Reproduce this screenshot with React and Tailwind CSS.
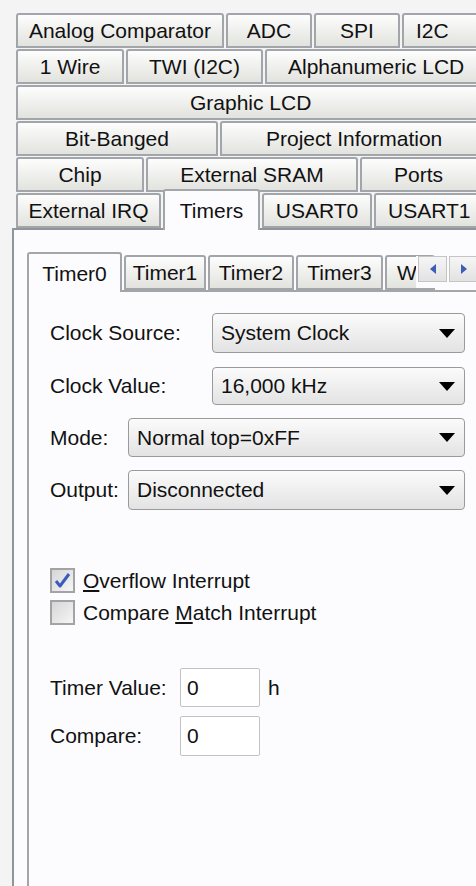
import React from "react";

const tabRows = [
  [
    { label: "Analog Comparator", w: 208 },
    { label: "ADC", w: 86 },
    { label: "SPI", w: 86 },
    { label: "I2C", w: 90, pl: 12 },
  ],
  [
    { label: "1 Wire", w: 108 },
    { label: "TWI (I2C)", w: 137 },
    { label: "Alphanumeric LCD", w: 230, pl: 21 },
  ],
  [{ label: "Graphic LCD", w: 480, pl: 172 }],
  [
    { label: "Bit-Banged", w: 202 },
    { label: "Project Information", w: 270, pl: 44 },
  ],
  [
    { label: "Chip", w: 128 },
    { label: "External SRAM", w: 212 },
    { label: "Ports", w: 130, pl: 32 },
  ],
];

const Tab = ({ label, w, pl }) => (
  <div
    className={`h-[35px] shrink-0 flex items-center rounded-t-[3px] border-2 border-[#a2a6aa] bg-gradient-to-b from-[#fdfdfd] to-[#e2e2de] ${
      pl ? "justify-start" : "justify-center"
    }`}
    style={{ width: w, paddingLeft: pl }}
  >
    <span className="whitespace-nowrap">{label}</span>
  </div>
);

const Dropdown = ({ value, width }) => (
  <div
    className="h-full flex items-center justify-between rounded-[4px] border border-[#9a9a9a] bg-gradient-to-b from-[#fbfbfb] to-[#e3e3e3] pl-[8px] pr-[9px] shrink-0"
    style={{ width }}
  >
    <span className="whitespace-nowrap">{value}</span>
    <svg width="16" height="9" viewBox="0 0 16 9">
      <polygon points="0,0 16,0 8,9" fill="#000" />
    </svg>
  </div>
);

const Checkbox = ({ checked, children }) => (
  <div className="h-[25px] flex items-center">
    <div className="w-[25px] h-[25px] shrink-0 border-2 border-[#a3a3a3] bg-gradient-to-br from-[#d6d6d6] to-[#f6f6f6] flex items-center justify-center">
      {checked && (
        <svg width="17" height="17" viewBox="0 0 17 17">
          <path
            d="M2 9 L6 14 L15 2"
            fill="none"
            stroke="#3d5bbd"
            strokeWidth="3"
            strokeLinejoin="round"
          />
        </svg>
      )}
    </div>
    <span className="ml-[8px] whitespace-nowrap">{children}</span>
  </div>
);

const ScrollButton = ({ dir }) => (
  <div className="w-[29px] h-[26px] border border-[#c4c4c4] bg-gradient-to-b from-[#f6f6f6] to-[#e2e2e2] flex items-center justify-center">
    <svg width="6" height="10" viewBox="0 0 6 10">
      <polygon
        points={dir === "left" ? "6,0 6,10 0,5" : "0,0 0,10 6,5"}
        fill="#3c5fb4"
      />
    </svg>
  </div>
);

export default function App() {
  return (
    <div
      className="w-[476px] h-[886px] overflow-hidden bg-[#f4f4f4] pt-[13px] pl-[12px] text-[21px] text-[#111] flex flex-col"
      style={{ fontFamily: '"Liberation Sans", Arial, sans-serif' }}
    >
      {/* stacked tab rows */}
      {tabRows.map((row, i) => (
        <div key={i} className="flex gap-[2px] pl-[4px] mb-[1px]">
          {row.map((t) => (
            <Tab key={t.label} {...t} />
          ))}
        </div>
      ))}
      <div className="flex items-end gap-[2px] pl-[4px] h-[35px]">
        <Tab label="External IRQ" w={145} />
        <div className="relative z-10 w-[97px] h-[41px] -mb-[2px] shrink-0 rounded-t-[3px] border-2 border-b-0 border-[#a2a6aa] bg-[#fcfcfe] flex justify-center pt-[4px]">
          Timers
        </div>
        <Tab label="USART0" w={110} />
        <Tab label="USART1" w={120} pl={12} />
      </div>

      {/* outer page */}
      <div className="flex-1 border-l-2 border-t-2 border-[#8f959c] bg-[#fcfcfe] pl-[13px] pt-[22px] flex flex-col">
        <div className="relative flex items-end gap-[2px] h-[38px]">
          <div className="relative z-10 w-[95px] h-[40px] -mb-[2px] shrink-0 rounded-t-[3px] border-2 border-b-0 border-[#a2a6aa] bg-[#fcfcfe] flex justify-center pt-[4px]">
            Timer0
          </div>
          <Tab label="Timer1" w={82} />
          <Tab label="Timer2" w={86} />
          <Tab label="Timer3" w={87} />
          <Tab label="W" w={50} pl={10} />
          <div className="absolute left-[389px] top-[4px] flex gap-[2px] bg-[#fcfcfe] pl-[2px] pb-[6px]">
            <ScrollButton dir="left" />
            <ScrollButton dir="right" />
          </div>
        </div>

        {/* timer page */}
        <div className="flex-1 border-l-2 border-t-2 border-[#a2a6aa] bg-[#fcfcfe] pl-[21px] pt-[21px] flex flex-col">
          <div className="h-[40px] flex items-center">
            <span className="w-[162px] shrink-0">Clock Source:</span>
            <Dropdown value="System Clock" width={253} />
          </div>
          <div className="h-[38px] mt-[14px] flex items-center">
            <span className="w-[162px] shrink-0">Clock Value:</span>
            <Dropdown value="16,000 kHz" width={253} />
          </div>
          <div className="h-[39px] mt-[13px] flex items-center">
            <span className="w-[78px] shrink-0">Mode:</span>
            <Dropdown value="Normal top=0xFF" width={337} />
          </div>
          <div className="h-[40px] mt-[13px] flex items-center">
            <span className="w-[78px] shrink-0">Output:</span>
            <Dropdown value="Disconnected" width={337} />
          </div>

          <div className="mt-[58px] flex flex-col gap-[7px]">
            <Checkbox checked>
              <span className="underline underline-offset-2">O</span>verflow
              Interrupt
            </Checkbox>
            <Checkbox>
              Compare <span className="underline underline-offset-2">M</span>
              atch Interrupt
            </Checkbox>
          </div>

          <div className="h-[39px] mt-[43px] flex items-center">
            <span className="w-[130px] shrink-0">Timer Value:</span>
            <div className="w-[80px] h-full rounded-[2px] border border-[#c3c3c3] bg-white flex items-center pl-[6px]">
              0
            </div>
            <span className="ml-[8px]">h</span>
          </div>
          <div className="h-[40px] mt-[9px] flex items-center">
            <span className="w-[130px] shrink-0">Compare:</span>
            <div className="w-[80px] h-full rounded-[2px] border border-[#c3c3c3] bg-white flex items-center pl-[6px]">
              0
            </div>
          </div>
        </div>
      </div>
    </div>
  );
}
